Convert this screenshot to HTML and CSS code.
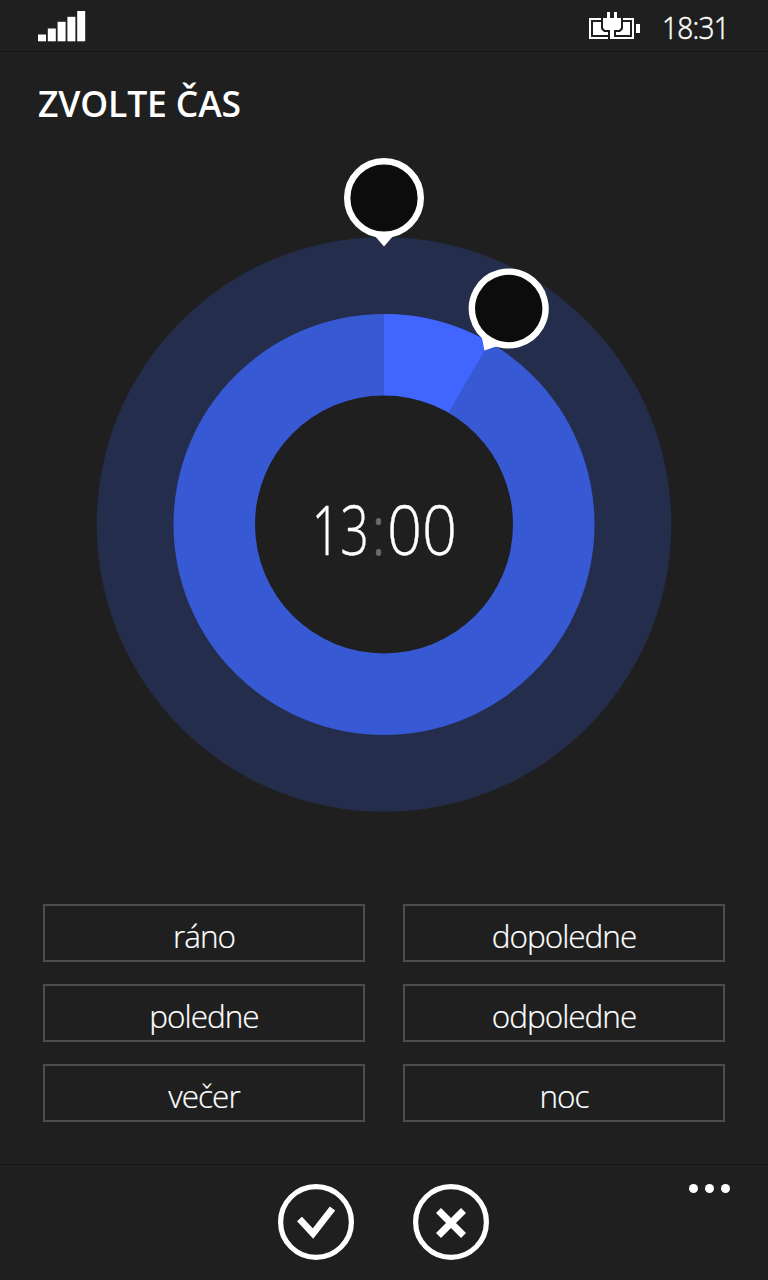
FILE: index.html
```html
<!DOCTYPE html>
<html lang="cs">
<head>
<meta charset="utf-8">
<title>Zvolte čas</title>
<link rel="stylesheet" href="styles.css">
</head>
<body>
<div class="phone">
  <header class="status">
    <svg class="signal" width="48" height="31" viewBox="0 0 48 31" fill="#fff">
      <rect x="0" y="23.500" width="8" height="6.800"/><rect x="9.800" y="17.500" width="8" height="12.800"/><rect x="19.600" y="10.800" width="8" height="19.500"/><rect x="29.400" y="5.800" width="8" height="24.500"/><rect x="39.200" y="0" width="8" height="30.300"/>
    </svg>
    <svg class="battery" width="51" height="28" viewBox="0 0 51 28">
      <rect x="1" y="7" width="43" height="19" fill="none" stroke="#fff" stroke-width="2"/>
      <rect x="4" y="10" width="37" height="13" fill="#fff"/>
      <rect x="47" y="12" width="4" height="9" fill="#fff"/>
      <path class="plug-gap" d="M12 5h22v12l-3 3h-4v5h-2v2h-6v-7h-4l-3-3V5z"/>
      <path d="M18 0h3v6h4V0h3v6h4v10l-2 2h-5v9h-4v-9h-5l-2-2V6h4z" fill="#fff"/>
    </svg>
    <span class="clock">18:31</span>
  </header>
  <main class="picker">
    <h1 class="title"><span>ZVOLTE ČAS</span></h1>
    <div class="dial">
      <svg width="576" height="656" viewBox="96 157 576 656">
        <circle cx="384" cy="524.5" r="287.3" fill="#242d4b"/>
        <circle cx="384" cy="524.5" r="210.5" fill="#3759d4"/>
        <path d="M384 524.5V314A210.5 210.5 0 0 1 489.25 342.2Z" fill="#4066ff"/>
        <circle cx="384" cy="524.5" r="129" fill="#1f1f1f"/>
        <g>
          <path d="M374 235h20l-10 11.5z" fill="#fff"/>
          <circle cx="384" cy="198" r="36.8" fill="#0c0c0c" stroke="#fff" stroke-width="6.4"/>
        </g>
        <g transform="translate(124.7 110.5) rotate(30 384 198)">
          <path d="M374 235h20l-10 11.5z" fill="#fff"/>
          <circle cx="384" cy="198" r="36.8" fill="#0c0c0c" stroke="#fff" stroke-width="6.4"/>
        </g>
        <g class="time">
          <text x="311.5" y="554.5" textLength="57.5" lengthAdjust="spacingAndGlyphs">13</text>
          <text class="colon" x="371.500" y="554.500" textLength="14" lengthAdjust="spacingAndGlyphs">:</text>
          <text x="387" y="554.5" textLength="70" lengthAdjust="spacingAndGlyphs">00</text>
        </g>
      </svg>
    </div>
    <div class="presets">
      <button class="preset">ráno</button>
      <button class="preset">dopoledne</button>
      <button class="preset">poledne</button>
      <button class="preset">odpoledne</button>
      <button class="preset">večer</button>
      <button class="preset">noc</button>
    </div>
  </main>
  <footer class="appbar">
    <svg class="action" width="76" height="76" viewBox="0 0 76 76">
      <circle cx="38" cy="38" r="35.4"/><path d="M21.5 35l13.500 14.500L54.500 24.500" stroke-width="6.800"/>
    </svg>
    <svg class="action" width="76" height="76" viewBox="0 0 76 76">
      <circle cx="38" cy="38" r="35.4"/><path d="M25.500 26.500l25 25M50.500 26.500l-25 25" stroke-width="7"/>
    </svg>
    <svg class="more" width="42" height="10" viewBox="0 0 42 10" fill="#fff"><circle cx="4.500" cy="4.500" r="4.500"/><circle cx="20.500" cy="4.500" r="4.500"/><circle cx="36.500" cy="4.500" r="4.500"/></svg>
  </footer>
</div>
</body>
</html>
```
FILE: styles.css
```css
* { box-sizing: border-box; }
body { margin: 0; background: #1f1f1f; color: #fff; font-family: "Open Sans", "Noto Sans", sans-serif; }
svg { display: block; flex: none; }
.phone { width: 768px; height: 1280px; display: flex; flex-direction: column; overflow: hidden; }
.status { height: 52px; display: flex; align-items: flex-start; border-bottom: 1px solid #161616; padding: 11px 40px 0 38px; }
.battery { margin: 1px 22px 0 auto; }
.plug-gap { fill: #1f1f1f; }
.clock { width: 66px; font-size: 31.5px; line-height: 32px; letter-spacing: -0.8px; white-space: nowrap; font-weight: 300; -webkit-text-stroke: 0.5px #fff; transform: scaleX(0.89); transform-origin: left; }
.picker { flex: 1; display: flex; flex-direction: column; }
.title { margin: 0; padding: 28px 38px 0; height: 105px; font-size: 35.5px; line-height: 46px; font-weight: 600; letter-spacing: -0.15px; }
.title span { display: inline-block; white-space: nowrap; }
.dial { height: 656px; display: flex; justify-content: center; }
.time { font-size: 69px; font-weight: 300; fill: #fff; stroke: #fff; stroke-width: 0.4px; }
.time .colon { fill: #6b6b6b; stroke: #6b6b6b; stroke-width: 1px; }
.presets { display: grid; grid-template-columns: 322px 322px; grid-auto-rows: 58px; gap: 22px 38px; padding: 91px 43px 0; }
.preset { appearance: none; background: none; border: 2px solid #4d4d4d; border-radius: 0; padding: 5px 0 0; color: #fff; font: 300 31.5px/44px "Open Sans", "Noto Sans", sans-serif; letter-spacing: -1px; -webkit-text-stroke: 0.2px #fff; }
.appbar { position: relative; height: 116px; border-top: 1px solid #161616; display: flex; justify-content: center; gap: 59px; padding: 19px 2px 0 0; }
.action { fill: none; stroke: #fff; stroke-width: 5.2; }
.more { position: absolute; right: 37px; top: 19px; }
```
